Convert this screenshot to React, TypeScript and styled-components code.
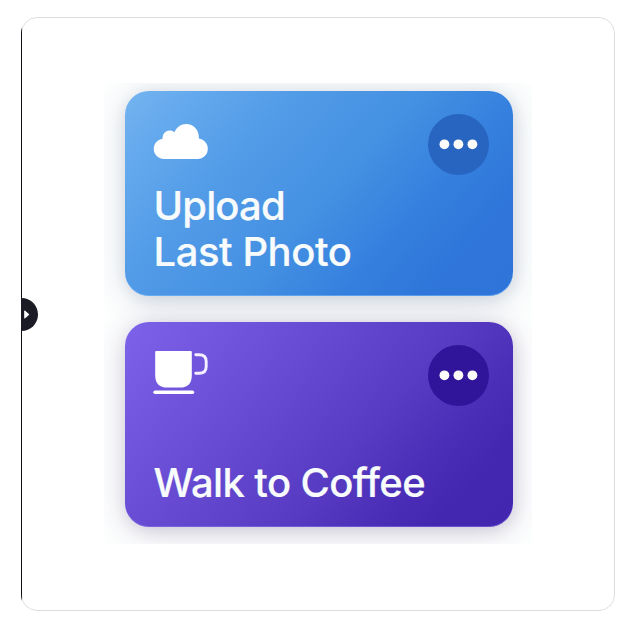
import React from "react";
import styled, { createGlobalStyle } from "styled-components";

const GlobalStyle = createGlobalStyle`
  *, *::before, *::after { box-sizing: border-box; }
  body { margin: 0; background: #fff; overflow: hidden; }
`;

const Page = styled.main`
  height: 635px;
  width: 640px;
  padding: 17px 25px 24px 21px;
  background: #fff;
`;

const Frame = styled.section`
  position: relative;
  width: 594px;
  height: 594px;
  padding: 66px 0 0 83px;
  border-radius: 16px;
  overflow: hidden;
  background: #fff;

  &::after {
    content: "";
    position: absolute;
    inset: 0;
    border: 1px solid #dcdcdc;
    border-radius: 16px;
    pointer-events: none;
  }
`;

const Divider = styled.div`
  position: absolute;
  z-index: 1;
  left: 0;
  top: 9px;
  bottom: 9px;
  width: 1px;
  background: #101018;
`;

const Handle = styled.button`
  position: absolute;
  z-index: 1;
  left: -16px;
  top: 281px;
  width: 33px;
  height: 33px;
  padding: 0;
  border: 0;
  border-radius: 50%;
  background: #1b1b25;
`;

const HandleArrow = styled.svg`
  position: absolute;
  left: 19px;
  top: 12px;
  width: 6px;
  height: 9px;
`;

const Preview = styled.div`
  width: 428px;
  height: 461px;
  padding: 8px 19.5px 0 21px;
  display: flex;
  flex-direction: column;
  gap: 26px;
  overflow: hidden;
  background: #fdfefe;
`;

type Tone = "blue" | "violet";

const tones = {
  blue: {
    fill: "linear-gradient(132deg, #74b3ef 0%, #62a8ed 14%, #529be7 30%, #4490e2 52%, #3580de 70%, #2f75da 85%, #2f74d9 100%)",
    shadow: "0 4px 30px rgba(70, 90, 125, 0.24), 2px 3px 14px rgba(70, 90, 120, 0.1)",
    rim: "rgba(125, 190, 250, 0.55)",
    button: "#2865c1",
  },
  violet: {
    fill: "linear-gradient(132deg, #7d62ea 0%, #7257de 18%, #6448cf 40%, #573bc2 60%, #4b2eb7 75%, #4427b0 86%, #4326af 100%)",
    shadow: "0 4px 30px rgba(70, 50, 110, 0.23), 2px 3px 14px rgba(60, 45, 105, 0.1)",
    rim: "rgba(145, 120, 240, 0.5)",
    button: "#30149a",
  },
};

const Card = styled.article<{ $tone: Tone }>`
  position: relative;
  flex: none;
  height: 205px;
  padding: 23px 23.5px 21px 29px;
  display: flex;
  flex-direction: column;
  justify-content: space-between;
  border-radius: 24px;
  background: ${(p) => tones[p.$tone].fill};
  box-shadow: ${(p) => tones[p.$tone].shadow},
    inset 0 -1px 0 ${(p) => tones[p.$tone].rim};
`;

/* Lifts the cards above each other's shadows. */
const Stack = styled.div`
  display: contents;
  & > article:first-child { z-index: 1; }
`;

const CardTop = styled.div`
  display: flex;
  justify-content: space-between;
  align-items: flex-start;
`;

const Glyph = styled.svg`
  display: block;
  width: 56px;
  height: 46px;
  margin-top: 5px;
  overflow: visible;
`;

const MoreButton = styled.button<{ $tone: Tone }>`
  display: flex;
  align-items: center;
  justify-content: center;
  width: 61px;
  height: 61px;
  padding: 0;
  border: 0;
  border-radius: 50%;
  background: ${(p) => tones[p.$tone].button};
`;

const Dots = styled.svg`
  display: block;
  width: 61px;
  height: 61px;
  fill: #fbfbf9;
`;

const Title = styled.h2`
  margin: 0 0 0 -0.5px;
  font: 500 40px/46px Inter, "Liberation Sans", sans-serif;
  color: #f8fbfb;
  -webkit-text-stroke: 0.2px #f8fbfb;
  white-space: nowrap;
`;

const Line = styled.span<{ $tracking: number }>`
  display: block;
  letter-spacing: ${(p) => p.$tracking}px;
`;

const CloudIcon = () => (
  <Glyph viewBox="0 0 56 46" fill="#fff">
    <path d="M10.5 40 C4.2 40 -0.2 35.8 -0.2 29.8 C-0.2 24.7 3.4 20.6 8.6 19.8 C8.2 15.2 11.3 11.4 15.6 11.4 C17.7 11.4 19.3 12 20.5 13.2 C22.6 8.2 27 5 32.2 5 C39.6 5 45 10.8 44.9 18.8 L44.9 19.6 C50.1 20.6 53.8 24.7 53.8 29.8 C53.8 35.8 49.4 40 43.4 40 Z" />
  </Glyph>
);

const CupIcon = () => (
  <Glyph viewBox="0 0 56 46">
    <path d="M2.2 1 H36.8 Q37.8 1 37.8 2 V25 Q37.8 37.6 26 37.6 H13.2 Q1.2 37.6 1.2 25 V2 Q1.2 1 2.2 1 Z" fill="#fff" />
    <path d="M41.8 4.8 H45 C50 4.8 52.2 7.2 52.2 11.5 V16.5 C52.2 21 50 23.2 45 23.2 H41.8" fill="none" stroke="#f4f0ff" strokeWidth="2.9" strokeLinecap="round" />
    <path d="M1 42.3 H38.5" stroke="#fff" strokeWidth="3.4" strokeLinecap="round" />
  </Glyph>
);

interface ShortcutProps {
  tone: Tone;
  icon: React.ReactNode;
  lines: { text: string; tracking: number }[];
}

const Shortcut = ({ tone, icon, lines }: ShortcutProps) => (
  <Card $tone={tone}>
    <CardTop>
      {icon}
      <MoreButton $tone={tone} aria-label="More options">
        <Dots viewBox="0 0 61 61">
          <circle cx="16.4" cy="30.3" r="4.9" />
          <circle cx="30.4" cy="30.3" r="4.9" />
          <circle cx="44.4" cy="30.3" r="4.9" />
        </Dots>
      </MoreButton>
    </CardTop>
    <Title>
      {lines.map((line) => (
        <Line key={line.text} $tracking={line.tracking}>
          {line.text}
        </Line>
      ))}
    </Title>
  </Card>
);

export default function App() {
  return (
    <Page>
      <GlobalStyle />
      <Frame>
        <Preview>
          <Stack>
            <Shortcut
              tone="blue"
              icon={<CloudIcon />}
              lines={[
                { text: "Upload", tracking: -0.85 },
                { text: "Last Photo", tracking: -0.45 },
              ]}
            />
            <Shortcut
              tone="violet"
              icon={<CupIcon />}
              lines={[{ text: "Walk to Coffee", tracking: -0.6 }]}
            />
          </Stack>
        </Preview>
        <Divider />
        <Handle aria-label="Drag to compare">
          <HandleArrow viewBox="0 0 6 9">
            <path d="M0.2 1.2 Q0.2 0.2 1.2 0.8 L4.9 3.9 Q5.6 4.5 4.9 5.1 L1.2 8.2 Q0.2 8.8 0.2 7.8 Z" fill="#fff" />
          </HandleArrow>
        </Handle>
      </Frame>
    </Page>
  );
}
